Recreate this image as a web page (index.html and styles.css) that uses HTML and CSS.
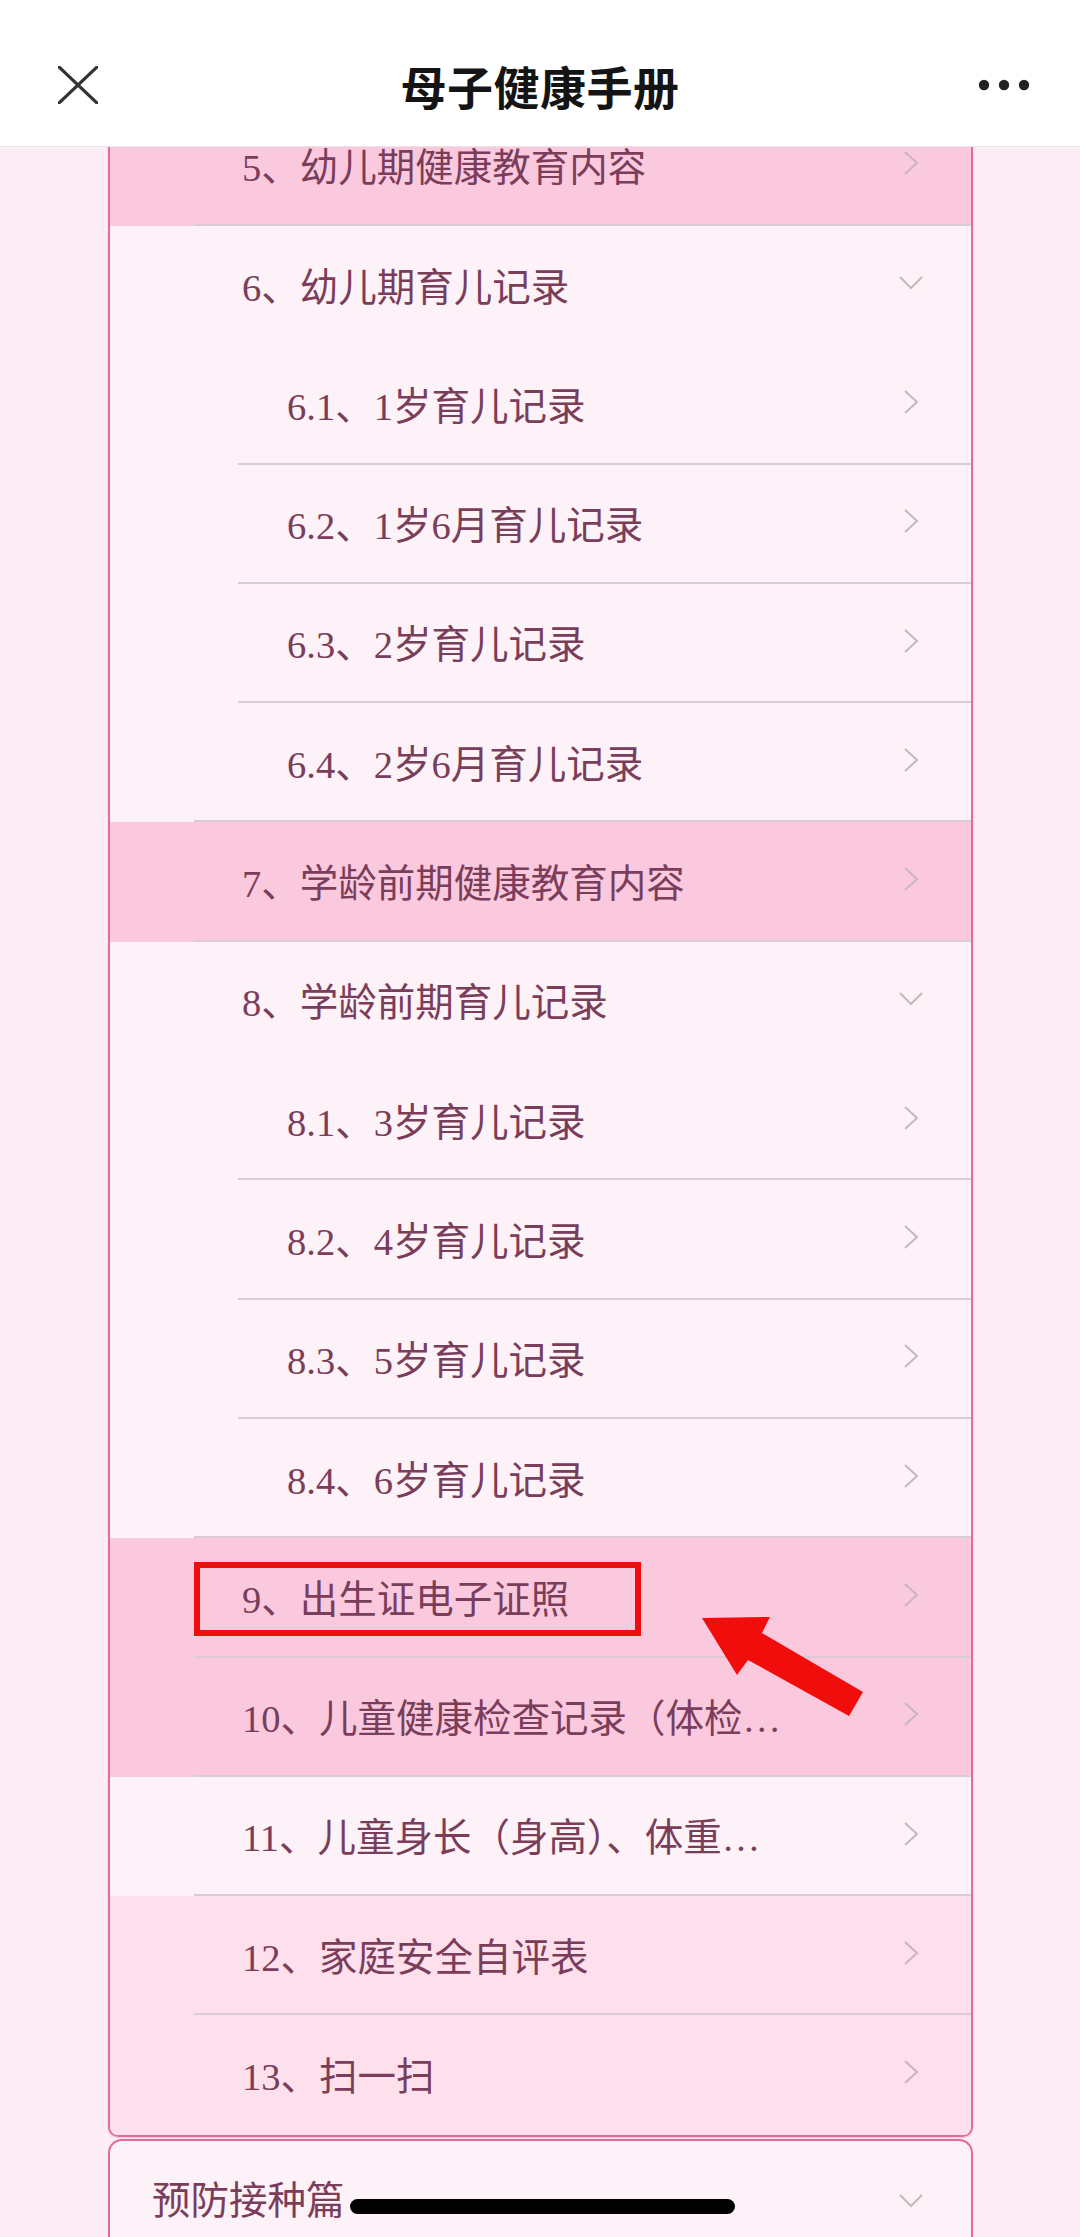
FILE: index.html
```html
<!DOCTYPE html>
<html lang="zh-CN">
<head>
<meta charset="utf-8">
<title>母子健康手册</title>
<link rel="stylesheet" href="styles.css">
</head>
<body>
<header class="topbar">
  <div class="bar-left">
    <svg class="icon-close" width="40" height="38" viewBox="0 0 40 38"><path d="M1 1 L39 37 M39 1 L1 37" stroke="#333" stroke-width="3.2" stroke-linecap="round" fill="none"/></svg>
  </div>
  <div class="bar-title">母子健康手册</div>
  <div class="bar-right">
    <svg class="icon-more" width="52" height="12" viewBox="0 0 52 12"><circle cx="6" cy="6" r="5.2" fill="#222"/><circle cx="26" cy="6" r="5.2" fill="#222"/><circle cx="46" cy="6" r="5.2" fill="#222"/></svg>
  </div>
</header>

<main class="content">
  <div class="scroller">
    <section class="card">
      <div class="row pink"><div class="cell"><span class="label">5、幼儿期健康教育内容</span><span class="ic"><svg class="chev-r" width="16" height="26" viewBox="0 0 16 26"><polyline points="2,2 14,13 2,24"/></svg></span></div></div>

      <div class="row white"><div class="cell noline"><span class="label">6、幼儿期育儿记录</span><span class="ic"><svg class="chev-d" width="26" height="15" viewBox="0 0 26 15"><polyline points="2,2 13,13 24,2"/></svg></span></div></div>
      <div class="row white"><div class="cell sub"><span class="label">6.1、1岁育儿记录</span><span class="ic"><svg class="chev-r" width="16" height="26" viewBox="0 0 16 26"><polyline points="2,2 14,13 2,24"/></svg></span></div></div>
      <div class="row white"><div class="cell sub"><span class="label">6.2、1岁6月育儿记录</span><span class="ic"><svg class="chev-r" width="16" height="26" viewBox="0 0 16 26"><polyline points="2,2 14,13 2,24"/></svg></span></div></div>
      <div class="row white"><div class="cell sub"><span class="label">6.3、2岁育儿记录</span><span class="ic"><svg class="chev-r" width="16" height="26" viewBox="0 0 16 26"><polyline points="2,2 14,13 2,24"/></svg></span></div></div>
      <div class="row white"><div class="cell sub last"><span class="label">6.4、2岁6月育儿记录</span><span class="ic"><svg class="chev-r" width="16" height="26" viewBox="0 0 16 26"><polyline points="2,2 14,13 2,24"/></svg></span></div></div>

      <div class="row pink"><div class="cell"><span class="label">7、学龄前期健康教育内容</span><span class="ic"><svg class="chev-r" width="16" height="26" viewBox="0 0 16 26"><polyline points="2,2 14,13 2,24"/></svg></span></div></div>

      <div class="row white"><div class="cell noline"><span class="label">8、学龄前期育儿记录</span><span class="ic"><svg class="chev-d" width="26" height="15" viewBox="0 0 26 15"><polyline points="2,2 13,13 24,2"/></svg></span></div></div>
      <div class="row white"><div class="cell sub"><span class="label">8.1、3岁育儿记录</span><span class="ic"><svg class="chev-r" width="16" height="26" viewBox="0 0 16 26"><polyline points="2,2 14,13 2,24"/></svg></span></div></div>
      <div class="row white"><div class="cell sub"><span class="label">8.2、4岁育儿记录</span><span class="ic"><svg class="chev-r" width="16" height="26" viewBox="0 0 16 26"><polyline points="2,2 14,13 2,24"/></svg></span></div></div>
      <div class="row white"><div class="cell sub"><span class="label">8.3、5岁育儿记录</span><span class="ic"><svg class="chev-r" width="16" height="26" viewBox="0 0 16 26"><polyline points="2,2 14,13 2,24"/></svg></span></div></div>
      <div class="row white"><div class="cell sub last"><span class="label">8.4、6岁育儿记录</span><span class="ic"><svg class="chev-r" width="16" height="26" viewBox="0 0 16 26"><polyline points="2,2 14,13 2,24"/></svg></span></div></div>

      <div class="row pink"><div class="cell"><span class="label">9、出生证电子证照</span><span class="ic"><svg class="chev-r" width="16" height="26" viewBox="0 0 16 26"><polyline points="2,2 14,13 2,24"/></svg></span></div></div>
      <div class="row pink"><div class="cell"><span class="label clip">10、儿童健康检查记录（体检查体检记录）</span><span class="ic"><svg class="chev-r" width="16" height="26" viewBox="0 0 16 26"><polyline points="2,2 14,13 2,24"/></svg></span></div></div>
      <div class="row white"><div class="cell"><span class="label clip">11、儿童身长（身高）、体重、头围曲线图</span><span class="ic"><svg class="chev-r" width="16" height="26" viewBox="0 0 16 26"><polyline points="2,2 14,13 2,24"/></svg></span></div></div>
      <div class="row light"><div class="cell"><span class="label">12、家庭安全自评表</span><span class="ic"><svg class="chev-r" width="16" height="26" viewBox="0 0 16 26"><polyline points="2,2 14,13 2,24"/></svg></span></div></div>
      <div class="row light"><div class="cell noline"><span class="label">13、扫一扫</span><span class="ic"><svg class="chev-r" width="16" height="26" viewBox="0 0 16 26"><polyline points="2,2 14,13 2,24"/></svg></span></div></div>
    </section>

    <section class="card card-next">
      <div class="head-row"><span class="label">预防接种篇</span><span class="ic"><svg class="chev-d" width="26" height="15" viewBox="0 0 26 15"><polyline points="2,2 13,13 24,2"/></svg></span></div>
    </section>
  </div>
</main>

<svg class="annotation" width="1080" height="2237" viewBox="0 0 1080 2237">
  <rect x="197" y="1565" width="441" height="68" fill="none" stroke="#f20d0d" stroke-width="6"/>
  <polygon points="702,1618 770,1617 762,1633 863,1692 849,1716 748,1660 737,1675" fill="#f20d0d"/>
</svg>

<div class="home-indicator"></div>
</body>
</html>
```

FILE: styles.css
```css
* {
  box-sizing: border-box;
}

html, body {
  margin: 0;
  padding: 0;
}

body {
  width: 1080px;
  height: 2237px;
  overflow: hidden;
  background: #fdedf4;
  position: relative;
  font-family: "Liberation Serif", "Noto Sans CJK SC", serif;
}

.topbar {
  position: relative;
  z-index: 3;
  height: 147px;
  background: #ffffff;
  border-bottom: 1px solid #ebe3e7;
  display: grid;
  grid-template-columns: 1fr auto 1fr;
  align-items: center;
  padding-top: 24px;
}

.bar-left {
  padding-left: 58px;
  display: flex;
  align-items: center;
}

.bar-right {
  display: flex;
  justify-content: flex-end;
  padding-right: 50px;
}

.bar-title {
  font-family: "Noto Sans CJK SC", sans-serif;
  font-weight: 700;
  font-size: 46px;
  color: #141414;
  letter-spacing: 0.5px;
}

.icon-close, .icon-more {
  display: block;
}

.content {
  height: 2090px;
  overflow: hidden;
}

.scroller {
  margin-top: -40.3px;
  padding-left: 108px;
}

.card {
  width: 865px;
  border-left: 2.5px solid #e26c9c;
  border-right: 2.5px solid #e26c9c;
  border-bottom: 2.5px solid #e26c9c;
  border-radius: 0 0 10px 10px;
  overflow: hidden;
  box-shadow: 0 1px 2px rgba(180, 90, 130, 0.25);
}

.row {
  height: 119.3px;
}

.row.pink {
  background: #fbc9de;
}

.row.white {
  background: #fdf2f7;
}

.row.light {
  background: #fde0eb;
}

.cell {
  height: 119.3px;
  margin-left: 84px;
  padding-left: 48px;
  padding-right: 47px;
  border-bottom: 2px solid #dccbd4;
  display: flex;
  align-items: center;
  justify-content: space-between;
}

.cell.sub {
  margin-left: 128px;
  padding-left: 49px;
}

.cell.sub.last {
  margin-left: 84px;
  padding-left: 93px;
}

.cell.noline {
  border-bottom-color: transparent;
}

.label {
  font-size: 38.5px;
  line-height: 1.2;
  color: #7a3d5a;
  white-space: nowrap;
  padding-top: 6px;
}

.label.clip {
  width: 550px;
  overflow: hidden;
  text-overflow: ellipsis;
}

.ic {
  width: 26px;
  display: flex;
  justify-content: center;
  margin-bottom: 4px;
}

.chev-r polyline,
.chev-d polyline {
  fill: none;
  stroke: #c7b6bf;
  stroke-width: 2;
}

.chev-r, .chev-d {
  display: block;
}

.card-next {
  margin-top: 2px;
  border-top: 2.5px solid #e26c9c;
  border-bottom: none;
  border-radius: 14px 14px 0 0;
  background: #fdf2f7;
  height: 200px;
  box-shadow: none;
}

.head-row {
  height: 120px;
  display: flex;
  align-items: center;
  justify-content: space-between;
  padding-left: 42px;
  padding-right: 47px;
}

.head-row .label {
  padding-top: 0;
}

.head-row .ic {
  margin-bottom: 0;
}

.annotation {
  position: absolute;
  top: 0;
  left: 0;
  z-index: 5;
  pointer-events: none;
}

.home-indicator {
  position: absolute;
  left: 350px;
  top: 2199px;
  width: 385px;
  height: 15px;
  border-radius: 8px;
  background: #000;
  z-index: 6;
}
```
